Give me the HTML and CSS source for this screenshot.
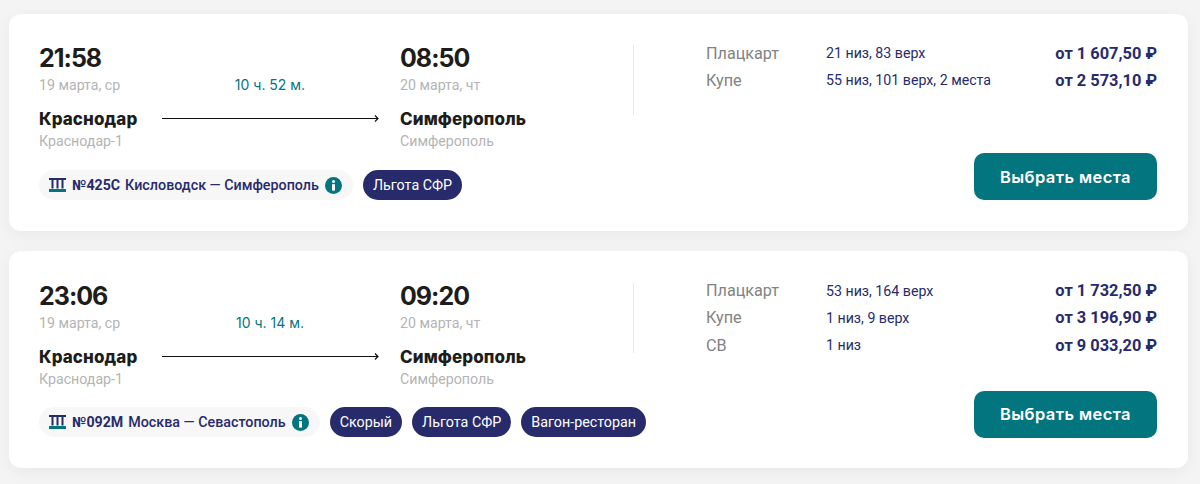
FILE: index.html
```html
<!DOCTYPE html>
<html lang="ru">
<head>
<meta charset="utf-8">
<title>Поезда</title>
<link rel="stylesheet" href="styles.css">
</head>
<body>
<svg class="defs" width="0" height="0" aria-hidden="true">
  <symbol id="rail" viewBox="0 0 17 14">
    <path d="M0 0h17v2H0z" fill="#272b6b"/>
    <path d="M2.500 2h2v8.500h-2zM7.500 2h2v8.500h-2zM12.500 2h2v8.500h-2z" fill="#272b6b"/>
    <path d="M0 11h17v3H0z" fill="#03757f"/>
  </symbol>
  <symbol id="info" viewBox="0 0 17 17">
    <circle cx="8.500" cy="8.500" r="8.500" fill="#03757f"/>
    <circle cx="8.500" cy="4.600" r="1.500" fill="#fff"/>
    <path d="M7 7.200h3v6.400H7z" fill="#fff"/>
  </symbol>
</svg>
<main class="list">
  <article class="card">
    <section class="trip">
      <div class="route">
        <div class="stop">
          <div class="time">21:58</div>
          <div class="date">19 марта, ср</div>
          <div class="city">Краснодар</div>
          <div class="station">Краснодар-1</div>
        </div>
        <div class="way">
          <div class="duration">10 ч. 52 м.</div>
          <svg class="arrow" width="218" height="9" viewBox="0 0 218 9"><path d="M0 4.500h216M213 1.500l3 3-3 3" fill="none" stroke="#111" stroke-width="1.200"/></svg>
        </div>
        <div class="stop">
          <div class="time">08:50</div>
          <div class="date">20 марта, чт</div>
          <div class="city">Симферополь</div>
          <div class="station">Симферополь</div>
        </div>
      </div>
      <div class="tags">
        <div class="train">
          <svg class="rail" width="17" height="14"><use href="#rail"/></svg>
          <b class="num">№425С</b>
          <span class="name">Кисловодск — Симферополь</span>
          <svg class="info" width="17" height="17"><use href="#info"/></svg>
        </div>
        <span class="tag">Льгота СФР</span>
      </div>
    </section>
    <div class="divider"></div>
    <section class="fares">
      <div class="fare"><span class="type">Плацкарт</span><span class="seats">21 низ, 83 верх</span><b class="price">от 1 607,50 ₽</b></div>
      <div class="fare"><span class="type">Купе</span><span class="seats">55 низ, 101 верх, 2 места</span><b class="price">от 2 573,10 ₽</b></div>
      <button class="choose">Выбрать места</button>
    </section>
  </article>
  <article class="card">
    <section class="trip">
      <div class="route">
        <div class="stop">
          <div class="time">23:06</div>
          <div class="date">19 марта, ср</div>
          <div class="city">Краснодар</div>
          <div class="station">Краснодар-1</div>
        </div>
        <div class="way">
          <div class="duration">10 ч. 14 м.</div>
          <svg class="arrow" width="218" height="9" viewBox="0 0 218 9"><path d="M0 4.500h216M213 1.500l3 3-3 3" fill="none" stroke="#111" stroke-width="1.200"/></svg>
        </div>
        <div class="stop">
          <div class="time">09:20</div>
          <div class="date">20 марта, чт</div>
          <div class="city">Симферополь</div>
          <div class="station">Симферополь</div>
        </div>
      </div>
      <div class="tags">
        <div class="train">
          <svg class="rail" width="17" height="14"><use href="#rail"/></svg>
          <b class="num">№092М</b>
          <span class="name">Москва — Севастополь</span>
          <svg class="info" width="17" height="17"><use href="#info"/></svg>
        </div>
        <span class="tag">Скорый</span>
        <span class="tag">Льгота СФР</span>
        <span class="tag">Вагон-ресторан</span>
      </div>
    </section>
    <div class="divider"></div>
    <section class="fares">
      <div class="fare"><span class="type">Плацкарт</span><span class="seats">53 низ, 164 верх</span><b class="price">от 1 732,50 ₽</b></div>
      <div class="fare"><span class="type">Купе</span><span class="seats">1 низ, 9 верх</span><b class="price">от 3 196,90 ₽</b></div>
      <div class="fare"><span class="type">СВ</span><span class="seats">1 низ</span><b class="price">от 9 033,20 ₽</b></div>
      <button class="choose">Выбрать места</button>
    </section>
  </article>
</main>
</body>
</html>
```
FILE: styles.css
```css
* { box-sizing: border-box; }
html, body { margin: 0; height: 484px; overflow: hidden; }
body { background: #f4f4f4; font-family: Roboto, "Liberation Sans", sans-serif; color: #272b6b; }
.defs { position: absolute; }
.list { display: flex; flex-direction: column; gap: 20.4px; padding: 14px 12px 0 9px; }
.card {
  display: flex; height: 217px; padding: 30.2px 31px 31px 30px;
  background: #fff; border-radius: 12px;
  box-shadow: 0 4px 16px rgba(0, 0, 0, 0.05);
}
.trip { width: 594px; flex: none; display: flex; flex-direction: column; justify-content: space-between; }
.route { display: flex; }
.stop { width: 123px; flex: none; }
.stop:last-child { width: 160px; }
.time { font: 700 25px/28px Inter, sans-serif; color: #1d1d1b; letter-spacing: -1px; }
.date, .station { font-size: 14.2px; line-height: 16px; color: #b4b4b4; }
.date { margin-top: 5px; }
.city { font: 800 17px/20px Inter, sans-serif; color: #1d1d1b; letter-spacing: 0.1px; margin-top: 16px; }
.station { margin-top: 4px; }
.way { width: 238px; flex: none; padding-top: 33px; display: flex; flex-direction: column; }
.duration { width: 216px; text-align: center; font: 400 14px/16px Inter, sans-serif; color: #03757f; }
.arrow { display: block; margin-top: 21px; }
.tags { display: flex; align-items: center; gap: 10px; }
.train {
  display: flex; align-items: center; height: 30px; padding: 0 11px 0 10px;
  background: #f7f7f7; border-radius: 15px;
  font-size: 14.3px; white-space: nowrap;
}
.rail { flex: none; margin-right: 6px; }
.num { font-weight: 700; margin-right: 5px; font-size: 14.2px; }
.name { font-weight: 500; margin-right: 6px; }
.info { flex: none; }
.tag {
  display: flex; align-items: center; height: 30px; padding: 0 10px;
  background: #272b6b; color: #fff; border-radius: 15px; font-size: 14.3px; white-space: nowrap;
}
.divider { width: 1px; height: 70px; margin-top: 1px; background: #e9e9e9; flex: none; }
.fares { flex: 1; padding-left: 72px; margin-top: -0.4px; margin-bottom: -0.2px; display: flex; flex-direction: column; gap: 8.2px; }
.fare { display: flex; align-items: center; height: 19px; font-size: 14.2px; }
.type { width: 120px; flex: none; font-size: 16.2px; color: #828282; }
.seats { flex: 1; }
.price { font-size: 16.4px; font-weight: 700; }
.choose {
  margin-top: auto; align-self: flex-end; width: 183px; height: 47px;
  border: 0; border-radius: 10px; background: #03757f; color: #fff;
  font: 600 16.5px/20px Inter, sans-serif; letter-spacing: 0.4px;
}
```
